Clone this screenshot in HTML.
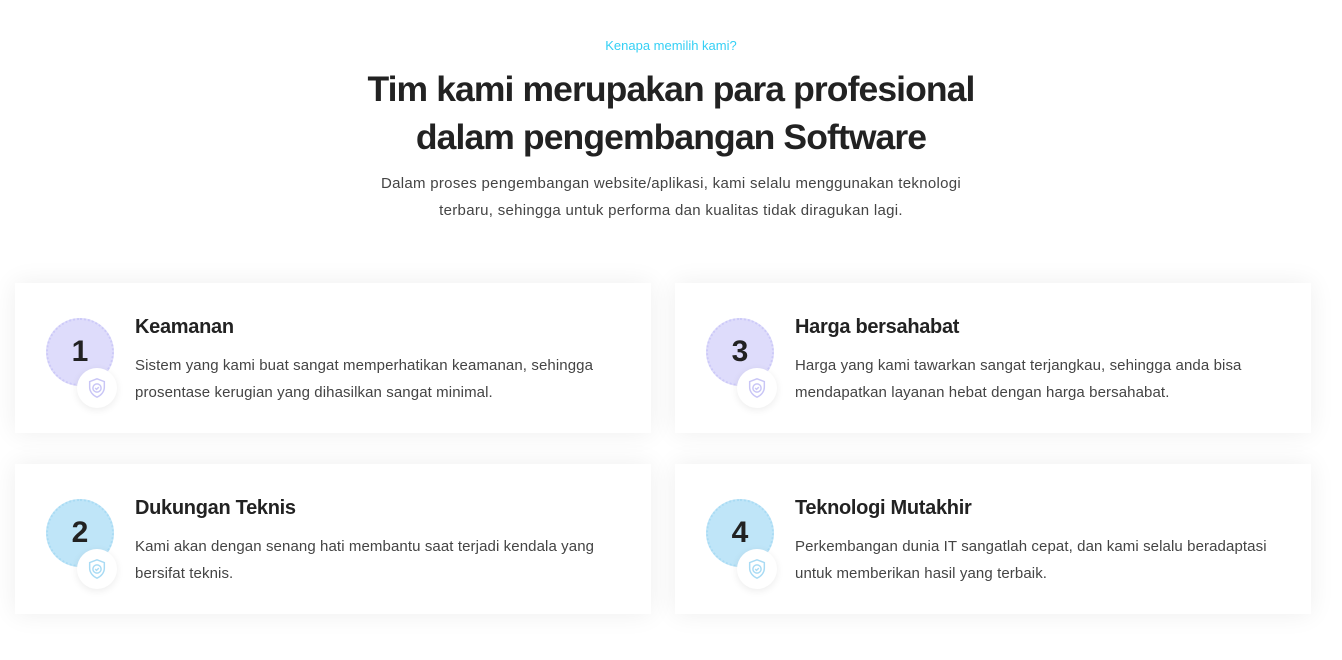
<!DOCTYPE html>
<html><head><meta charset="utf-8"><style>
*{margin:0;padding:0;box-sizing:border-box}
body{width:1342px;height:660px;background:#fff;font-family:"Liberation Sans",sans-serif;color:#222;position:relative;overflow:hidden}
.sub{position:absolute;top:38px;left:0;width:1342px;text-align:center;font-size:13px;color:#35d0f5}
h1{position:absolute;top:65px;left:0;width:1342px;text-align:center;font-size:35.5px;line-height:48px;font-weight:bold;letter-spacing:-0.9px;color:#222}
.p{position:absolute;top:170px;left:0;width:1342px;text-align:center;font-size:15px;line-height:27px;color:#444;letter-spacing:0.3px}
.card{position:absolute;width:636px;height:150px;background:#fff;box-shadow:0 0 24px rgba(0,0,0,0.07)}
.circ{position:absolute;left:31px;top:35px;width:68px;height:68px;border-radius:50%;border:2px dotted;font-size:30px;font-weight:bold;display:flex;align-items:center;justify-content:center}
.lav{background:#dedcfb;border-color:#ccc9f8}
.blu{background:#bfe5f8;border-color:#a9dbf4}
.wc{position:absolute;left:62px;top:85px;width:40px;height:40px;border-radius:50%;background:#fff;box-shadow:0 2px 8px rgba(0,0,0,0.08);display:flex;align-items:center;justify-content:center}
.t{position:absolute;left:120px;top:33px;font-size:20px;font-weight:bold;letter-spacing:-0.3px}
.d{position:absolute;left:120px;top:69px;width:490px;font-size:15px;line-height:27px;color:#444;letter-spacing:0.1px}
</style></head><body>
<div class="sub">Kenapa memilih kami?</div>
<h1>Tim kami merupakan para profesional<br>dalam pengembangan Software</h1>
<div class="p">Dalam proses pengembangan website/aplikasi, kami selalu menggunakan teknologi<br>terbaru, sehingga untuk performa dan kualitas tidak diragukan lagi.</div>

<div class="card" style="left:15px;top:283px">
<div class="circ lav">1</div><div class="wc"><svg width="22" height="22" viewBox="0 0 24 24" fill="none" stroke="#c9c6f6" stroke-width="1.6"><path d="M12 2l8 3v6c0 5-3.5 9-8 11-4.5-2-8-6-8-11V5z"/><circle cx="12" cy="12" r="4.5"/><path d="M10 12l1.5 1.5 2.5-2.5"/></svg></div>
<div class="t">Keamanan</div><div class="d">Sistem yang kami buat sangat memperhatikan keamanan, sehingga<br>prosentase kerugian yang dihasilkan sangat minimal.</div></div>

<div class="card" style="left:675px;top:283px">
<div class="circ lav">3</div><div class="wc"><svg width="22" height="22" viewBox="0 0 24 24" fill="none" stroke="#c9c6f6" stroke-width="1.6"><path d="M12 2l8 3v6c0 5-3.5 9-8 11-4.5-2-8-6-8-11V5z"/><circle cx="12" cy="12" r="4.5"/><path d="M10 12l1.5 1.5 2.5-2.5"/></svg></div>
<div class="t">Harga bersahabat</div><div class="d">Harga yang kami tawarkan sangat terjangkau, sehingga anda bisa<br>mendapatkan layanan hebat dengan harga bersahabat.</div></div>

<div class="card" style="left:15px;top:464px">
<div class="circ blu">2</div><div class="wc"><svg width="22" height="22" viewBox="0 0 24 24" fill="none" stroke="#a9dbf4" stroke-width="1.6"><path d="M12 2l8 3v6c0 5-3.5 9-8 11-4.5-2-8-6-8-11V5z"/><circle cx="12" cy="12" r="4.5"/><path d="M10 12l1.5 1.5 2.5-2.5"/></svg></div>
<div class="t">Dukungan Teknis</div><div class="d">Kami akan dengan senang hati membantu saat terjadi kendala yang<br>bersifat teknis.</div></div>

<div class="card" style="left:675px;top:464px">
<div class="circ blu">4</div><div class="wc"><svg width="22" height="22" viewBox="0 0 24 24" fill="none" stroke="#a9dbf4" stroke-width="1.6"><path d="M12 2l8 3v6c0 5-3.5 9-8 11-4.5-2-8-6-8-11V5z"/><circle cx="12" cy="12" r="4.5"/><path d="M10 12l1.5 1.5 2.5-2.5"/></svg></div>
<div class="t">Teknologi Mutakhir</div><div class="d">Perkembangan dunia IT sangatlah cepat, dan kami selalu beradaptasi<br>untuk memberikan hasil yang terbaik.</div></div>
</body></html>
